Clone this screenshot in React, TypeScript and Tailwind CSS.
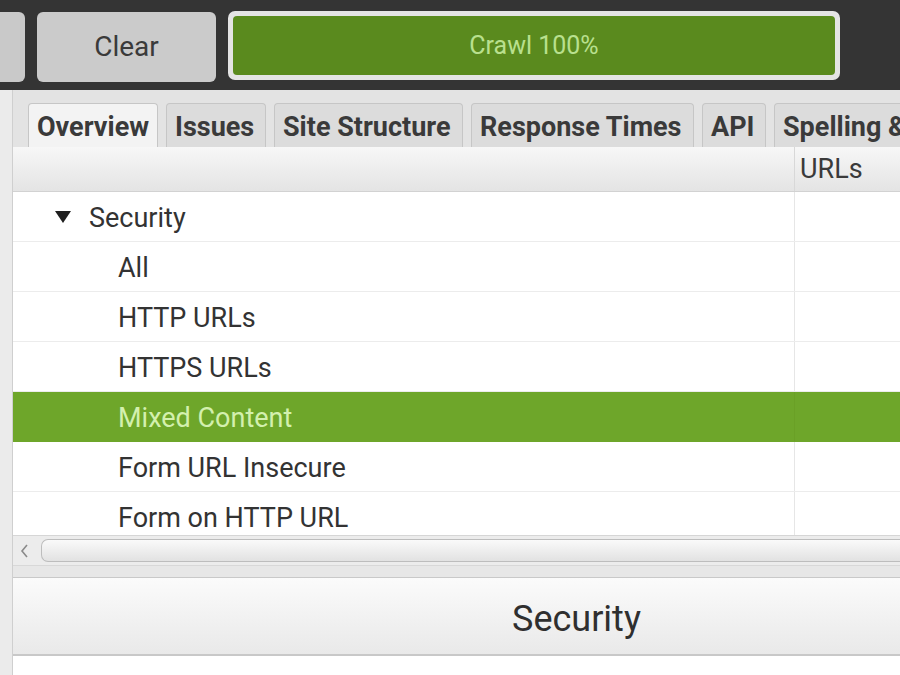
const tabs = [
  { label: "Overview", w: "w-[130px]", active: true },
  { label: "Issues", w: "w-[100px]" },
  { label: "Site Structure", w: "w-[189px]" },
  { label: "Response Times", w: "w-[223px]" },
  { label: "API", w: "w-[64px]" },
  { label: "Spelling & Grammar", w: "w-[240px]" },
];

const rows = [
  "All",
  "HTTP URLs",
  "HTTPS URLs",
  "Mixed Content",
  "Form URL Insecure",
  "Form on HTTP URL",
];

export default function App() {
  return (
    <div className="w-[900px] h-[675px] overflow-hidden bg-white font-['Roboto',sans-serif] text-[#333]">
      {/* top toolbar */}
      <div className="h-[90px] bg-[#343434] flex items-start pt-[12px] gap-[12px] overflow-hidden">
        <div className="w-[25px] h-[70px] bg-[#c9c9c9] rounded-r-[6px] shrink-0" />
        <div className="w-[179px] h-[70px] bg-[#cbcbcb] rounded-[6px] flex items-center justify-center text-[28px] text-[#3a3a3a] shrink-0">
          Clear
        </div>
        <div className="w-[612px] h-[69px] -mt-[1px] rounded-[7px] bg-[#e4e4e4] p-[5px] shrink-0">
          <div className="h-full rounded-[4px] bg-[#5a8a1e] flex items-center justify-center text-[25px] text-[#b9e08e]">
            Crawl 100%
          </div>
        </div>
      </div>

      <div className="flex h-[585px]">
        <div className="w-[13px] shrink-0 bg-[#ebebeb] border-r border-[#cfcfcf]" />
        <div className="flex-1 flex flex-col min-w-0 overflow-hidden">
          {/* tabs */}
          <div className="h-[57px] shrink-0 bg-[#e3e3e3] flex items-end pl-[15px] gap-[8px] overflow-hidden">
            {tabs.map((t) => (
              <div
                key={t.label}
                className={`${t.w} h-[44px] shrink-0 rounded-t-[4px] border border-b-0 border-[#c6c6c6] flex items-center pl-[8px] pt-[3px] text-[27px] font-bold whitespace-nowrap overflow-hidden ${
                  t.active ? "bg-[#f3f3f3] text-[#3a3a3a]" : "bg-[#dcdcdc] text-[#3a3a3a]"
                }`}
              >
                {t.label}
              </div>
            ))}
          </div>

          {/* header */}
          <div className="h-[45px] shrink-0 flex bg-gradient-to-b from-[#f7f7f7] to-[#e4e4e4] border-b border-[#d2d2d2]">
            <div className="w-[782px] shrink-0 border-r border-[#d8d8d8]" />
            <div className="pl-[5px] flex items-center text-[27px] text-[#3a3a3a]">URLs</div>
          </div>

          {/* tree rows */}
          <div className="h-[343px] shrink-0 overflow-hidden">
            <div className="h-[50px] flex border-b border-[#ececec]">
              <div className="w-[782px] shrink-0 border-r border-[#e6e6e6] flex items-center pl-[41px] pt-[3px] text-[27px]">
                <svg width="18" height="14" viewBox="0 0 18 14" className="mr-[17px] -mt-[3px]">
                  <path d="M1 1 H17 L9 13 Z" fill="#1f1f1f" />
                </svg>
                Security
              </div>
            </div>
            {rows.map((r) => {
              const sel = r === "Mixed Content";
              return (
                <div
                  key={r}
                  className={`h-[50px] flex border-b ${
                    sel ? "bg-[#6ea62a] border-[#6ea62a] text-[#d3f0ae]" : "border-[#ececec] text-[#333]"
                  }`}
                >
                  <div
                    className={`w-[782px] shrink-0 border-r flex items-center pl-[105px] pt-[3px] text-[27px] ${
                      sel ? "border-[#6aa026]" : "border-[#e6e6e6]"
                    }`}
                  >
                    {r}
                  </div>
                </div>
              );
            })}
          </div>

          {/* horizontal scrollbar */}
          <div className="h-[30px] shrink-0 bg-[#ececec] border-t border-[#d6d6d6] flex items-center">
            <svg width="10" height="16" viewBox="0 0 10 16" className="ml-[6px]">
              <path d="M8 2 L3 8 L8 14" fill="none" stroke="#8a8a8a" strokeWidth="1.6" />
            </svg>
            <div className="ml-[12px] flex-1 h-[23px] rounded-l-[7px] border border-r-0 border-[#bdbdbd] bg-gradient-to-b from-[#fafafa] to-[#e2e2e2]" />
          </div>
          <div className="h-[13px] shrink-0 bg-[#e7e7e7] border-t border-[#d8d8d8] border-b border-b-[#c9c9c9]" />

          {/* bottom title bar */}
          <div className="h-[78px] shrink-0 bg-gradient-to-b from-[#fbfbfb] to-[#e9e9e9] border-b-2 border-[#c8c8c8] flex items-center pl-[499px] pt-[6px] text-[36px] text-[#2f2f2f]">
            Security
          </div>
          <div className="flex-1 bg-white" />
        </div>
      </div>
    </div>
  );
}
